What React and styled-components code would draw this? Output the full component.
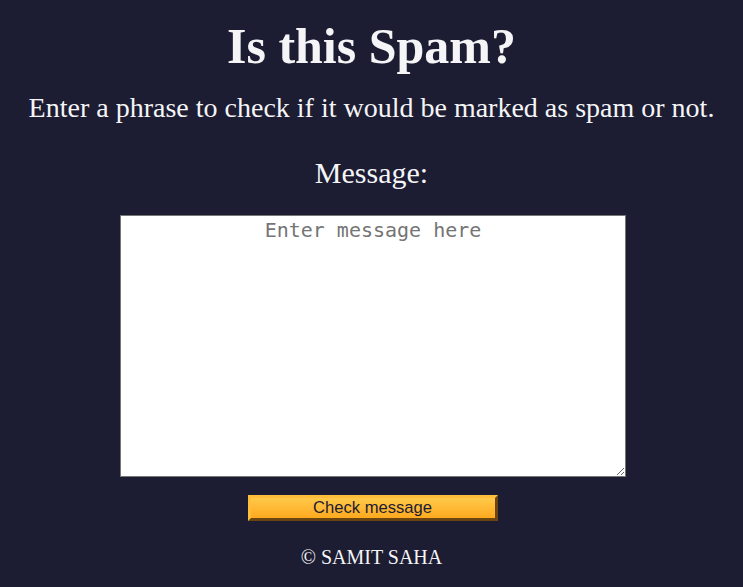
import React from "react";
import styled, { createGlobalStyle } from "styled-components";

const GlobalStyle = createGlobalStyle`
  body {
    margin: 0;
    background-color: #1c1c32;
    font-family: "Liberation Serif", "Times New Roman", serif;
  }
`;

const Container = styled.div`
  display: flex;
  flex-direction: column;
  align-items: center;
  color: #f5f5f7;
  text-align: center;
`;

const Title = styled.h1`
  font-size: 50px;
  font-weight: 700;
  margin: 18px 0 0;
  line-height: 57px;
`;

const Subtitle = styled.p`
  font-size: 28px;
  margin: 17px 0 0;
  line-height: 32px;
`;

const Label = styled.label`
  font-size: 30px;
  margin-top: 32px;
  line-height: 34px;
`;

const MessageBox = styled.textarea`
  box-sizing: border-box;
  width: 506px;
  height: 262px;
  margin: 25px 0 0 3px;
  border: 1px solid #767676;
  background: #fff;
  padding: 2px;
  font-family: "DejaVu Sans Mono", monospace;
  font-size: 20px;
  text-align: center;
  resize: both;

  &::placeholder {
    color: #757575;
  }
`;

const CheckButton = styled.button`
  width: 250px;
  height: 26px;
  margin: 18px 0 0 2px;
  background: linear-gradient(#ffc94a, #ffa91f);
  border: 3px outset #e0a030;
  border-color: #ffbe3a #c07a18 #c07a18 #ffbe3a;
  font-family: "Liberation Sans", Arial, sans-serif;
  font-size: 16.6px;
  color: #1c1c32;
  padding: 0;
  cursor: pointer;
`;

const Footer = styled.footer`
  font-size: 20px;
  margin-top: 24px;
  line-height: 24px;
`;

const App = () => {
  return (
    <Container>
      <GlobalStyle />
      <Title>Is this Spam?</Title>
      <Subtitle>
        Enter a phrase to check if it would be marked as spam or not.
      </Subtitle>
      <Label htmlFor="message">Message:</Label>
      <MessageBox id="message" placeholder="Enter message here" />
      <CheckButton>Check message</CheckButton>
      <Footer>© SAMIT SAHA</Footer>
    </Container>
  );
};

export default App;
